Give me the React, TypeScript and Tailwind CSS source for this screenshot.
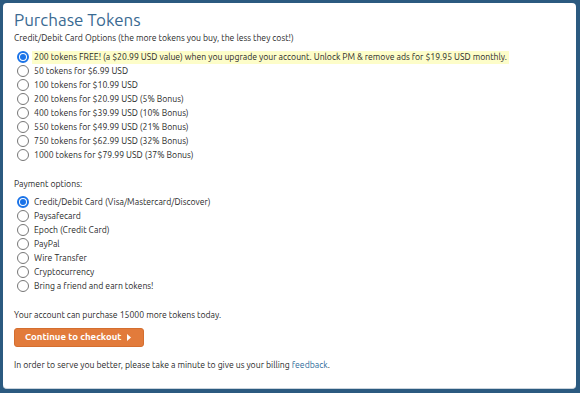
import React from "react";

const Radio = ({ checked }: { checked?: boolean }) =>
  checked ? (
    <span className="flex-none w-[12px] h-[12px] rounded-full border-[2px] border-[#1a73e8] bg-white flex items-center justify-center">
      <span className="w-[6px] h-[6px] rounded-full bg-[#1a73e8]" />
    </span>
  ) : (
    <span className="flex-none w-[12px] h-[12px] rounded-full border border-[#767676] bg-white" />
  );

const Row = ({ label, checked, hl }: { label: string; checked?: boolean; hl?: boolean }) => (
  <div className="flex items-center h-[14px] pl-[3px]">
    <Radio checked={checked} />
    <span className={"ml-[3px] px-[2px] leading-[13px] whitespace-nowrap " + (hl ? "bg-[#fdfdc9]" : "")}>{label}</span>
  </div>
);

export default function App() {
  const tokens = [
    "50 tokens for $6.99 USD",
    "100 tokens for $10.99 USD",
    "200 tokens for $20.99 USD (5% Bonus)",
    "400 tokens for $39.99 USD (10% Bonus)",
    "550 tokens for $49.99 USD (21% Bonus)",
    "750 tokens for $62.99 USD (32% Bonus)",
    "1000 tokens for $79.99 USD (37% Bonus)",
  ];
  const pays = [
    "Paysafecard",
    "Epoch (Credit Card)",
    "PayPal",
    "Wire Transfer",
    "Cryptocurrency",
    "Bring a friend and earn tokens!",
  ];
  return (
    <div
      className="w-[580px] h-[393px] bg-[#2b5a80] pt-[3px] pl-[3px] pr-[4px] pb-[4px] text-[#2a2a2a] text-[8.7px]"
      style={{ fontFamily: 'Ubuntu, Lato, "Noto Sans", sans-serif' }}
    >
      <div className="h-full bg-white rounded-[4px] border-b border-b-[#c9d3dc] px-[11px] pt-[6px]">
        <h1 className="text-[17px] leading-[22px] text-[#3a6a92]">Purchase Tokens</h1>
        <div className="leading-[14px]">Credit/Debit Card Options (the more tokens you buy, the less they cost!)</div>
        <div className="mt-[5px]">
          <Row checked hl label="200 tokens FREE! (a $20.99 USD value) when you upgrade your account. Unlock PM & remove ads for $19.95 USD monthly." />
          {tokens.map((t) => (
            <Row key={t} label={t} />
          ))}
        </div>
        <div className="mt-[15px] leading-[14px]">Payment options:</div>
        <div className="mt-[4px]">
          <Row checked label="Credit/Debit Card (Visa/Mastercard/Discover)" />
          {pays.map((t) => (
            <Row key={t} label={t} />
          ))}
        </div>
        <div className="mt-[15px] leading-[14px]">Your account can purchase 15000 more tokens today.</div>
        <button className="mt-[6px] h-[19px] w-[130px] rounded-[3px] bg-[#e27b3b] border border-[#d46e2f] text-white font-bold text-[9.6px] flex items-center pl-[10px] whitespace-nowrap">
          <span>Continue to checkout</span>
          <svg className="ml-[6px]" width="4" height="7" viewBox="0 0 4 7">
            <path d="M0 0 L4 3.5 L0 7 Z" fill="white" />
          </svg>
        </button>
        <div className="mt-[11px] leading-[14px]">
          In order to serve you better, please take a minute to give us your billing{" "}
          <span className="text-[#2e6b9a]">feedback</span>.
        </div>
      </div>
    </div>
  );
}
